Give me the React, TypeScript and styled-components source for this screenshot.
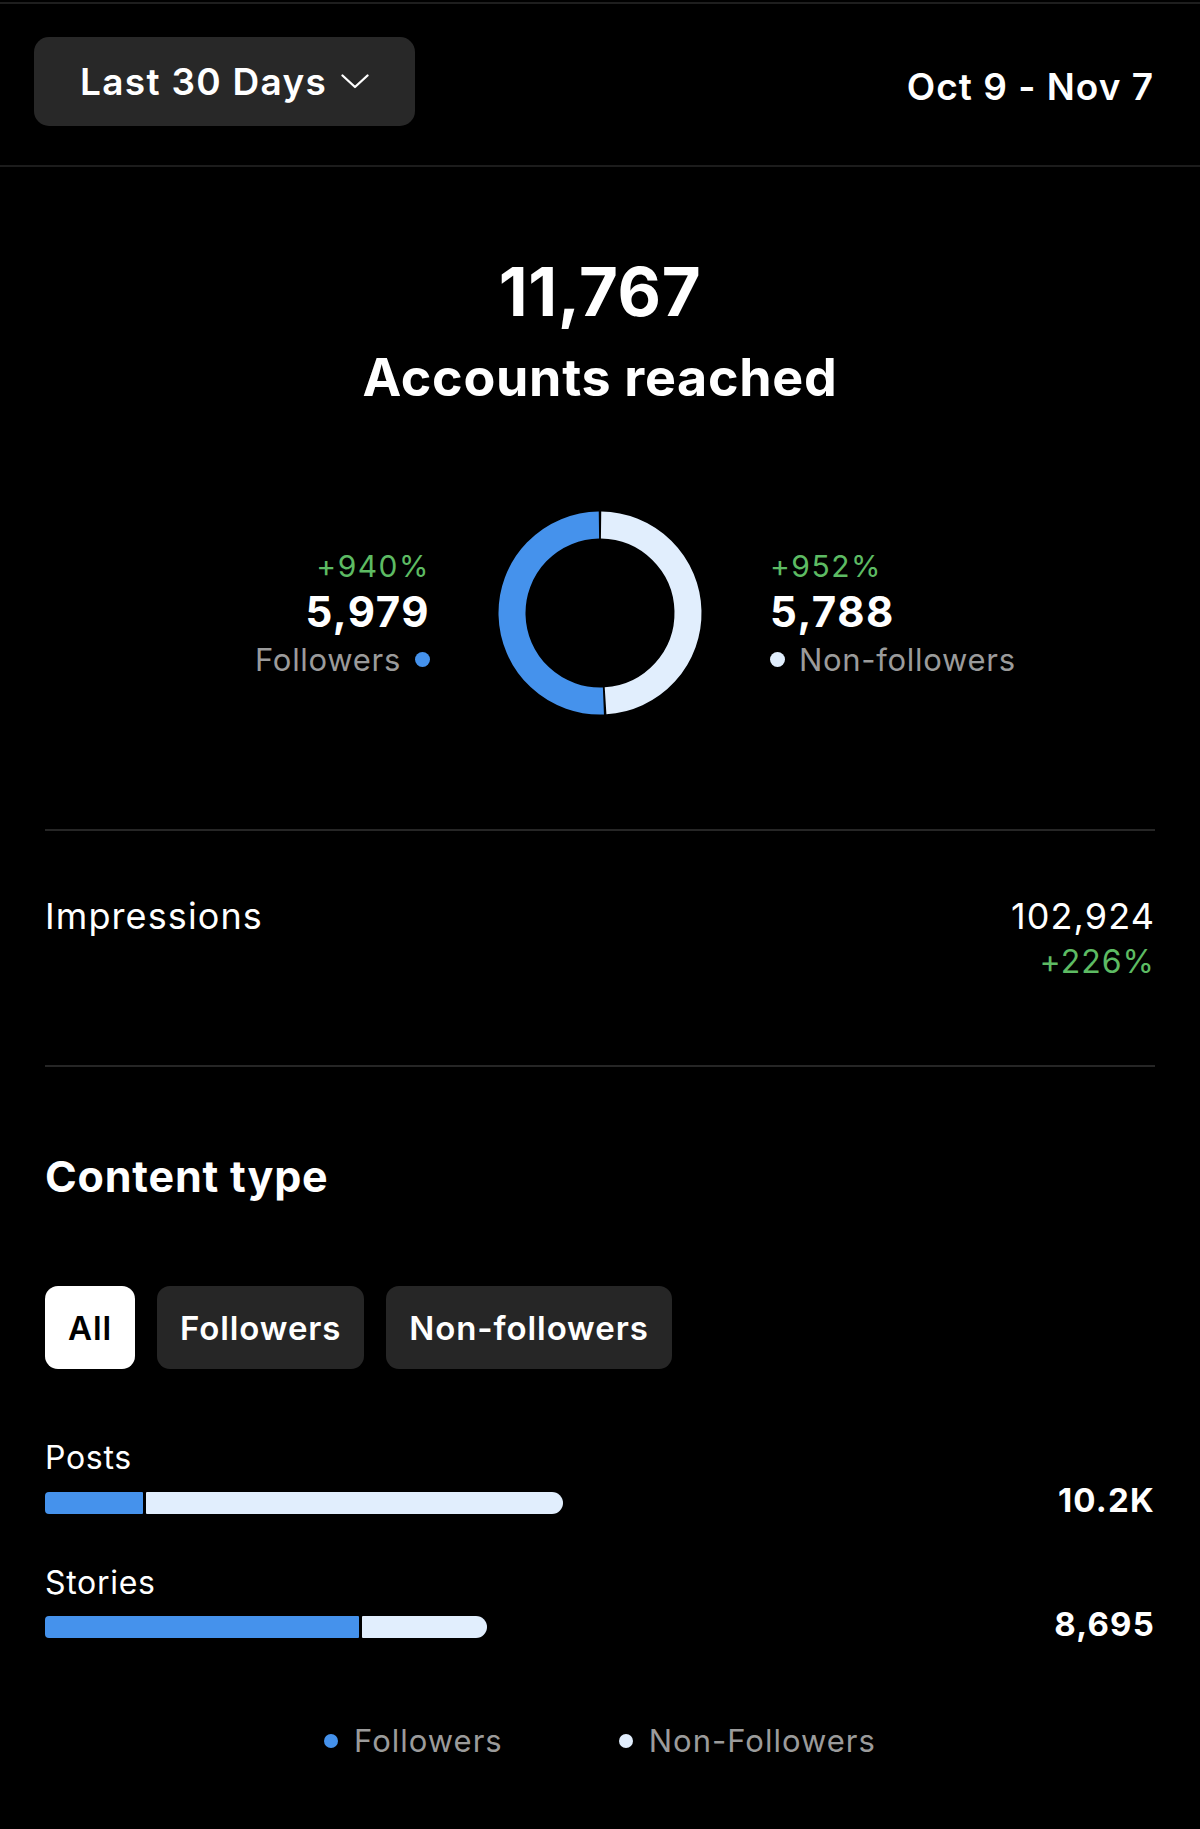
import React from "react";
import styled, { createGlobalStyle } from "styled-components";

const GlobalStyle = createGlobalStyle`
  html, body {
    margin: 0;
    padding: 0;
    background: #000;
  }
  body {
    font-family: Inter, "Noto Sans", "Liberation Sans", sans-serif;
    color: #fff;
    -webkit-font-smoothing: antialiased;
  }
`;

const BLUE = "#4592ec";
const LIGHT = "#e1eefd";
const GREEN = "#5dbb63";
const GRAY = "#9b9b9b";

const Page = styled.div`
  width: 1200px;
  min-height: 1829px;
  background: #000;
`;

const TopRule = styled.div`
  height: 2px;
  margin-top: 2px;
  background: #1e1e1e;
`;

const Header = styled.header`
  display: flex;
  align-items: center;
  justify-content: space-between;
  padding: 33px 46px 39px 34px;
  border-bottom: 2px solid #1c1c1c;
`;

const RangeButton = styled.button`
  display: flex;
  align-items: center;
  gap: 14px;
  height: 89px;
  padding: 0 46px;
  border: none;
  border-radius: 15px;
  background: #282828;
  color: #fff;
  font-family: inherit;
  font-size: 37px;
  font-weight: 600;
  letter-spacing: 1.3px;
`;

const DateRange = styled.span`
  margin-top: 9px;
  font-size: 37px;
  font-weight: 600;
  letter-spacing: 1px;
`;

const Main = styled.main`
  padding: 0 45px;
`;

const Hero = styled.section`
  display: flex;
  flex-direction: column;
  align-items: center;
  padding-top: 91px;
`;

const BigNumber = styled.div`
  font-size: 67px;
  line-height: 1;
  font-weight: 700;
  letter-spacing: 0.6px;
`;

const HeroLabel = styled.h1`
  margin: 27px 0 0;
  font-size: 52px;
  line-height: 1;
  font-weight: 700;
  letter-spacing: 0.7px;
`;

const DonutRow = styled.div`
  display: grid;
  grid-template-columns: 1fr auto 1fr;
  align-items: center;
  column-gap: 68px;
  margin-top: 107px;
  padding-bottom: 114px;
  border-bottom: 2px solid #262626;
`;

const Stat = styled.div<{ $align: "left" | "right" }>`
  display: flex;
  flex-direction: column;
  align-items: ${(p) => (p.$align === "right" ? "flex-end" : "flex-start")};
  gap: 5px;
`;

const Change = styled.span<{ $size?: number }>`
  color: ${GREEN};
  font-size: ${(p) => p.$size ?? 30}px;
  line-height: 1.2;
  letter-spacing: ${(p) => (p.$size ? 1 : 1.5)}px;
`;

const StatValue = styled.span`
  font-size: 42px;
  line-height: 1.1;
  font-weight: 700;
  letter-spacing: 1.5px;
`;

const StatLabel = styled.span`
  display: flex;
  align-items: center;
  gap: 14px;
  color: ${GRAY};
  font-size: 31px;
  line-height: 1.2;
  letter-spacing: 0.7px;
`;

const Dot = styled.span<{ $color: string; $size?: number }>`
  width: ${(p) => p.$size ?? 15}px;
  height: ${(p) => p.$size ?? 15}px;
  border-radius: 50%;
  background: ${(p) => p.$color};
  flex-shrink: 0;
`;

const MetricRow = styled.section`
  display: flex;
  justify-content: space-between;
  align-items: flex-start;
  padding: 64px 0 83px;
  border-bottom: 2px solid #262626;
`;

const MetricLabel = styled.span`
  font-size: 36px;
  line-height: 1.2;
  letter-spacing: 1.1px;
`;

const MetricValues = styled.div`
  display: flex;
  flex-direction: column;
  align-items: flex-end;
  gap: 5px;
`;

const SectionTitle = styled.h2`
  margin: 84px 0 0;
  font-size: 43px;
  line-height: 1.2;
  font-weight: 700;
  letter-spacing: 0.8px;
`;

const Tabs = styled.div`
  display: flex;
  gap: 22px;
  margin-top: 84px;
`;

const Tab = styled.button<{ $active?: boolean }>`
  height: 83px;
  padding: 0 23px;
  border: none;
  border-radius: 13px;
  background: ${(p) => (p.$active ? "#fff" : "#262626")};
  color: ${(p) => (p.$active ? "#000" : "#fff")};
  font-family: inherit;
  font-size: 33px;
  font-weight: 600;
  letter-spacing: 0.9px;
`;

const Breakdown = styled.div`
  display: flex;
  flex-direction: column;
  gap: 47px;
  margin-top: 70px;
`;

const BreakdownItem = styled.div`
  display: flex;
  flex-direction: column;
  gap: 11px;
`;

const ItemLabel = styled.span`
  font-size: 32px;
  line-height: 1.2;
  letter-spacing: 0.7px;
`;

const BarRow = styled.div`
  display: flex;
  align-items: center;
  justify-content: space-between;
`;

const Bar = styled.div`
  display: flex;
  gap: 3px;
  height: 22px;
`;

const BarPart = styled.div<{ $kind: "followers" | "others" }>`
  height: 100%;
  background: ${(p) => (p.$kind === "followers" ? BLUE : LIGHT)};
  border-radius: ${(p) => (p.$kind === "followers" ? "4px 1px 1px 4px" : "1px 11px 11px 1px")};
`;

const ItemValue = styled.span`
  font-size: 33px;
  line-height: 1;
  font-weight: 700;
  letter-spacing: 1.2px;
  margin-top: -5px;
`;

const Legend = styled.div`
  display: flex;
  justify-content: center;
  gap: 116px;
  margin-top: 81px;
`;

const LegendItem = styled.span`
  display: flex;
  align-items: center;
  gap: 16px;
  color: ${GRAY};
  font-size: 31px;
  line-height: 1.2;
  letter-spacing: 1px;
`;

function Chevron() {
  return (
    <svg width="28" height="15" viewBox="0 0 28 15" fill="none">
      <path d="M1.5 1.5 L14 13 L26.5 1.5" stroke="#fff" strokeWidth="2.3" strokeLinecap="round" strokeLinejoin="round" />
    </svg>
  );
}

function arc(cx: number, cy: number, r: number, from: number, to: number) {
  // angles in degrees, 0 = top, clockwise
  const pt = (a: number) => {
    const rad = ((a - 90) * Math.PI) / 180;
    return [cx + r * Math.cos(rad), cy + r * Math.sin(rad)];
  };
  const [x1, y1] = pt(from);
  const [x2, y2] = pt(to);
  const large = to - from > 180 ? 1 : 0;
  return `M ${x1} ${y1} A ${r} ${r} 0 ${large} 1 ${x2} ${y2}`;
}

function Donut({ followers, others }: { followers: number; others: number }) {
  const share = (others / (followers + others)) * 360;
  const gap = 0.7;
  return (
    <svg width="204" height="204" viewBox="0 0 204 204">
      <path d={arc(102, 102, 88, gap, share - gap)} stroke={LIGHT} strokeWidth="27" fill="none" />
      <path d={arc(102, 102, 88, share + gap, 360 - gap)} stroke={BLUE} strokeWidth="27" fill="none" />
    </svg>
  );
}

const content = [
  { label: "Posts", total: 10200, followerShare: 0.19, value: "10.2K" },
  { label: "Stories", total: 8695, followerShare: 0.71, value: "8,695" },
];

const BAR_MAX = 518;

export default function App() {
  return (
    <Page>
      <GlobalStyle />
      <TopRule />
      <Header>
        <RangeButton>
          Last 30 Days <Chevron />
        </RangeButton>
        <DateRange>Oct 9 - Nov 7</DateRange>
      </Header>

      <Main>
        <Hero>
          <BigNumber>11,767</BigNumber>
          <HeroLabel>Accounts reached</HeroLabel>
        </Hero>

        <DonutRow>
          <Stat $align="right">
            <Change>+940%</Change>
            <StatValue>5,979</StatValue>
            <StatLabel>
              Followers <Dot $color={BLUE} />
            </StatLabel>
          </Stat>
          <Donut followers={5979} others={5788} />
          <Stat $align="left">
            <Change>+952%</Change>
            <StatValue>5,788</StatValue>
            <StatLabel>
              <Dot $color={LIGHT} /> Non-followers
            </StatLabel>
          </Stat>
        </DonutRow>

        <MetricRow>
          <MetricLabel>Impressions</MetricLabel>
          <MetricValues>
            <MetricLabel>102,924</MetricLabel>
            <Change $size={32}>+226%</Change>
          </MetricValues>
        </MetricRow>

        <SectionTitle>Content type</SectionTitle>

        <Tabs>
          <Tab $active>All</Tab>
          <Tab>Followers</Tab>
          <Tab>Non-followers</Tab>
        </Tabs>

        <Breakdown>
          {content.map((item) => {
            const width = (item.total / 10200) * BAR_MAX;
            return (
              <BreakdownItem key={item.label}>
                <ItemLabel>{item.label}</ItemLabel>
                <BarRow>
                  <Bar style={{ width }}>
                    <BarPart $kind="followers" style={{ width: width * item.followerShare }} />
                    <BarPart $kind="others" style={{ flex: 1 }} />
                  </Bar>
                  <ItemValue>{item.value}</ItemValue>
                </BarRow>
              </BreakdownItem>
            );
          })}
        </Breakdown>

        <Legend>
          <LegendItem>
            <Dot $color={BLUE} $size={14} /> Followers
          </LegendItem>
          <LegendItem>
            <Dot $color={LIGHT} $size={14} /> Non-Followers
          </LegendItem>
        </Legend>
      </Main>
    </Page>
  );
}
